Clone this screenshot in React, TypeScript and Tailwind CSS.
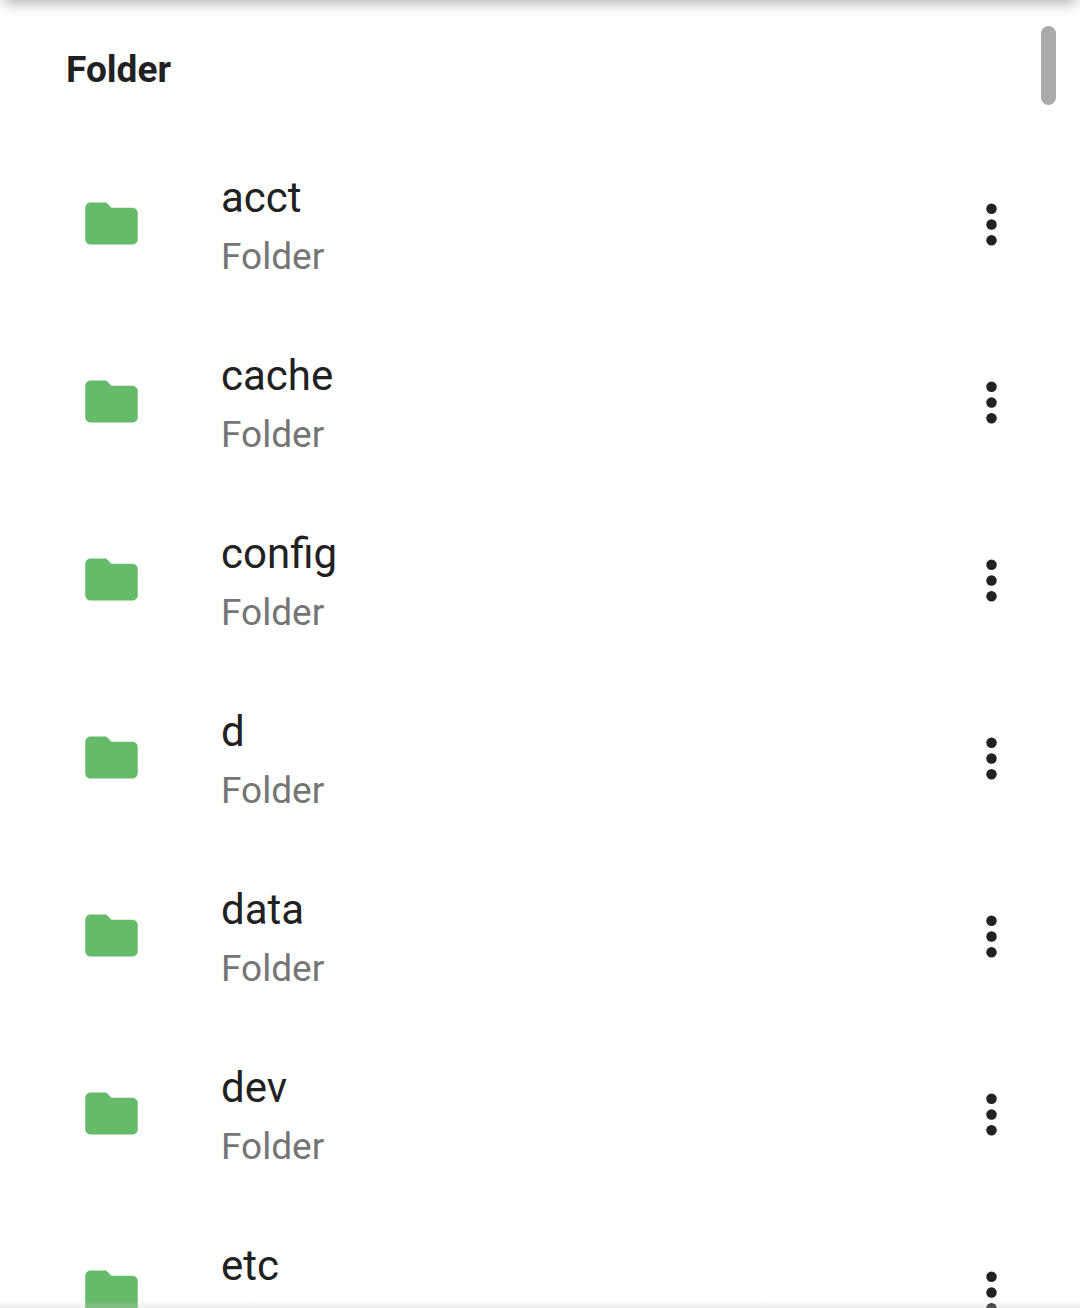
const folders = ["acct", "cache", "config", "d", "data", "dev", "etc"];

function FolderIcon() {
  return (
    <svg viewBox="0 0 24 24" className="size-[63px] shrink-0 fill-[#66bb6a]" aria-hidden="true">
      <path d="M10 4H4c-1.1 0-1.99.9-1.99 2L2 18c0 1.1.9 2 2 2h16c1.1 0 2-.9 2-2V8c0-1.1-.9-2-2-2h-8l-2-2z" />
    </svg>
  );
}

function MoreIcon() {
  return (
    <svg viewBox="0 0 24 24" className="size-[63px] fill-[#212121]" aria-hidden="true">
      <circle cx="12" cy="6" r="2" />
      <circle cx="12" cy="12" r="2" />
      <circle cx="12" cy="18" r="2" />
    </svg>
  );
}

function FolderRow({ name }: { name: string }) {
  return (
    <li className="flex h-[178px] items-center pr-[57px] pl-20">
      <FolderIcon />
      <div className="ml-[78px] min-w-0 flex-1 pt-2">
        <p className="truncate text-[42px] leading-[60px] text-[#212121]">{name}</p>
        <p className="text-[37px] leading-[58px] text-[#757575]">Folder</p>
      </div>
      <button type="button" aria-label={`More options for ${name}`} className="shrink-0 pt-0.5">
        <MoreIcon />
      </button>
    </li>
  );
}

export default function App() {
  return (
    <main className="relative h-screen overflow-hidden bg-white font-['Roboto',sans-serif]">
      <h2 className="px-[66px] pt-10 pb-[34px] text-[37px] leading-[60px] font-bold text-[#212121]">
        Folder
      </h2>
      <ul>
        {folders.map((name) => (
          <FolderRow key={name} name={name} />
        ))}
      </ul>
      <div className="absolute inset-x-1 -top-10 h-10 shadow-[0_3px_14px_rgba(0,0,0,0.32)]" />
      <div className="absolute top-[26px] right-6 h-[79px] w-[15px] rounded-full bg-[#aaaaaa]" />
      <div className="absolute inset-x-0 bottom-0 h-2 bg-linear-to-t from-[#ebebeb]/30 to-[#ebebeb]/0" />
      <div className="absolute inset-x-0 bottom-0 h-2 bg-linear-to-t from-black/5 to-black/0" />
    </main>
  );
}
